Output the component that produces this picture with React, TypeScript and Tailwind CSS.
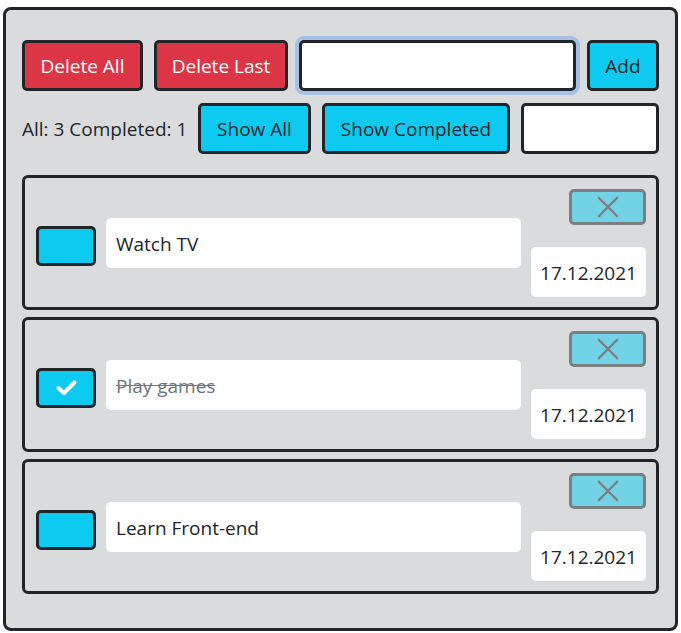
import { useState } from 'react';

type Todo = {
  id: number;
  title: string;
  done: boolean;
  date: string;
};

const initialTodos: Todo[] = [
  { id: 1, title: 'Watch TV', done: false, date: '17.12.2021' },
  { id: 2, title: 'Play games', done: true, date: '17.12.2021' },
  { id: 3, title: 'Learn Front-end', done: false, date: '17.12.2021' },
];

function CheckIcon() {
  return (
    <svg width="23" height="17" viewBox="0 0 23 17" fill="none">
      <polyline
        points="3.5,9 9,14 19.5,3.5"
        stroke="white"
        strokeWidth="4"
        strokeLinecap="round"
        strokeLinejoin="round"
      />
    </svg>
  );
}

function CloseIcon() {
  return (
    <svg width="22" height="22" viewBox="0 0 22 22" fill="none">
      <path d="M2 2 L20 20 M20 2 L2 20" stroke="#212529" strokeWidth="2.3" strokeLinecap="square" />
    </svg>
  );
}

function TodoCard({ todo, onToggle }: { todo: Todo; onToggle: () => void }) {
  return (
    <div className="flex h-[135px] items-center rounded-[6px] border-[3px] border-[#212529] pl-[11px] pr-[9px]">
      {/* checkbox */}
      <button
        onClick={onToggle}
        className="mt-[6px] flex h-[40px] w-[60px] shrink-0 items-center justify-center rounded-[5px] border-[3px] border-[#212529] bg-[#0dcaf0]"
      >
        {todo.done && <CheckIcon />}
      </button>

      <div className="ml-[10px] flex h-[50px] w-[415px] items-center rounded-[5px] bg-white pl-[10px] pt-[3px]">
        <span className={todo.done ? 'text-[#6c757d] line-through' : 'text-[#212529]'}>{todo.title}</span>
      </div>

      <div className="ml-[10px] flex w-[115px] flex-col items-end">
        <button className="flex h-[36px] w-[77px] items-center justify-center rounded-[5px] border-[3px] border-[#212529] bg-[#0dcaf0] opacity-50">
          <CloseIcon />
        </button>
        <div className="mt-[22px] flex h-[50px] w-[115px] items-center justify-center rounded-[5px] bg-white pt-[3px] text-[#212529]">
          {todo.date}
        </div>
      </div>
    </div>
  );
}

export default function App() {
  const [todos, setTodos] = useState<Todo[]>(initialTodos);
  const [text, setText] = useState('');
  const [search, setSearch] = useState('');

  const completed = todos.filter((t) => t.done).length;

  const toggle = (id: number) => {
    setTodos(todos.map((t) => (t.id === id ? { ...t, done: !t.done } : t)));
  };

  return (
    <div
      className="min-h-screen bg-white pl-[3px] pt-[7px] text-[19px] leading-[1.5]"
      style={{ fontFamily: '"Open Sans", "Noto Sans", sans-serif' }}
    >
      <div className="h-[624px] w-[675px] rounded-[8px] border-[3px] border-[#212529] bg-[#dadbdd] px-[16px] pt-[30px]">
        {/* top row */}
        <div className="flex h-[51px] gap-[11px]">
          <button
            onClick={() => setTodos([])}
            className="w-[121px] rounded-[5px] border-[3px] border-[#212529] bg-[#dc3545] pt-[2px] text-white"
          >
            Delete All
          </button>
          <button
            onClick={() => setTodos(todos.slice(0, -1))}
            className="w-[134px] rounded-[5px] border-[3px] border-[#212529] bg-[#dc3545] pt-[2px] text-white"
          >
            Delete Last
          </button>
          <input
            value={text}
            onChange={(e) => setText(e.target.value)}
            className="min-w-0 flex-1 rounded-[5px] border-[3px] border-[#212529] bg-white px-3 shadow-[0_0_0_4px_#a7c0e5] outline-none"
          />
          <button className="w-[72px] rounded-[5px] border-[3px] border-[#212529] bg-[#0dcaf0] pt-[2px] text-[#212529]">
            Add
          </button>
        </div>

        {/* filter row */}
        <div className="mt-[12px] flex h-[51px] items-center gap-[11px]">
          <span className="w-[165px] whitespace-nowrap pt-[2px] text-[#212529]">
            All: {todos.length} Completed: {completed}
          </span>
          <button className="h-full w-[113px] rounded-[5px] border-[3px] border-[#212529] bg-[#0dcaf0] pt-[2px] text-[#212529]">
            Show All
          </button>
          <button className="h-full w-[188px] whitespace-nowrap rounded-[5px] border-[3px] border-[#212529] bg-[#0dcaf0] pt-[2px] text-[#212529]">
            Show Completed
          </button>
          <input
            value={search}
            onChange={(e) => setSearch(e.target.value)}
            className="h-full min-w-0 flex-1 rounded-[5px] border-[3px] border-[#212529] bg-white px-3 outline-none"
          />
        </div>

        {/* list */}
        <div className="mt-[21px] flex flex-col gap-[7px]">
          {todos.map((t) => (
            <TodoCard key={t.id} todo={t} onToggle={() => toggle(t.id)} />
          ))}
        </div>
      </div>
    </div>
  );
}
